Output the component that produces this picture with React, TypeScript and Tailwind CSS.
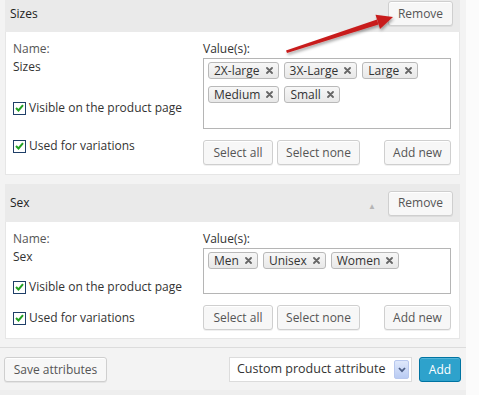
import React from 'react';

const font = { fontFamily: '"Open Sans", "Noto Sans", sans-serif' };

function XIcon() {
  return (
    <svg width="7" height="7" viewBox="0 0 7 7" className="shrink-0">
      <path d="M1 1 L6 6 M6 1 L1 6" stroke="#666" strokeWidth="1.8" strokeLinecap="round" />
    </svg>
  );
}

function Tag({ label }: { label: string }) {
  return (
    <span className="inline-flex items-center h-[17px] pl-[5px] pr-[5px] gap-[6px] border border-[#b9b9b9] rounded-[3px] bg-gradient-to-b from-[#f7f7f7] to-[#e8e8e8] text-[#333] leading-none">
      {label}
      <XIcon />
    </span>
  );
}

function Btn({ children, className = '' }: { children: React.ReactNode; className?: string }) {
  return (
    <button
      type="button"
      className={`h-[25px] whitespace-nowrap border border-[#cfcfcf] rounded-[3px] bg-[#f7f7f7] text-[#555] shadow-[inset_0_1px_0_#fff,0_1px_0_rgba(0,0,0,0.06)] leading-none ${className}`}
    >
      {children}
    </button>
  );
}

function Check({ label, className = '' }: { label: string; className?: string }) {
  return (
    <div className={`flex items-center gap-[3px] h-[18px] text-[#333] whitespace-nowrap ${className}`}>
      <span className="w-[13px] h-[13px] border border-[#1f3f68] bg-white flex items-center justify-center">
        <svg width="9" height="8" viewBox="0 0 9 8">
          <path d="M1 4 L3.5 6.5 L8 1.2" stroke="#21a121" strokeWidth="2" fill="none" />
        </svg>
      </span>
      {label}
    </div>
  );
}

interface AttrProps {
  name: string;
  values: string[];
  boxH: number;
  visibleMt: string;
  usedMt: string;
  headerH: string;
  bodyPb: string;
  arrow?: boolean;
}

function Attribute({ name, values, boxH, visibleMt, usedMt, headerH, bodyPb, arrow }: AttrProps) {
  return (
    <div>
      <div className={`flex items-center bg-[#eaeaea] pl-[5px] pr-[7px] ${headerH}`}>
        <span className="text-[#222] flex-1">{name}</span>
        {arrow && <span className="text-[#b5b5b5] text-[8px] mr-[12px] mt-[5px]">▲</span>}
        <Btn className="w-[65px] h-[24px]">Remove</Btn>
      </div>
      <div className={`flex bg-white border border-[#e6e6e6] border-t-0 pt-[8px] pl-[7px] pr-[8px] ${bodyPb}`}>
        <div className="w-[190px] flex flex-col leading-[18px]">
          <span className="text-[#555]">Name:</span>
          <span className="text-[#333]">{name}</span>
          <Check label="Visible on the product page" className={visibleMt} />
          <Check label="Used for variations" className={usedMt} />
        </div>
        <div className="flex-1 flex flex-col leading-[18px]">
          <span className="text-[#333]">Value(s):</span>
          <div
            className="border border-[#b5b5b5] bg-white flex flex-wrap content-start gap-x-[5px] gap-y-[7px] pt-[3px] pl-[4px] pr-[4px]"
            style={{ height: boxH }}
          >
            {values.map((v) => (
              <Tag key={v} label={v} />
            ))}
          </div>
          <div className="flex mt-[11px] gap-[4px]">
            <Btn className="w-[70px]">Select all</Btn>
            <Btn className="w-[83px]">Select none</Btn>
            <Btn className="w-[67px] ml-auto">Add new</Btn>
          </div>
        </div>
      </div>
    </div>
  );
}

export default function App() {
  return (
    <div className="relative w-[479px] h-[395px] overflow-hidden bg-[#fbfbfb] text-[12px]" style={font}>
      <div className="w-[466px] h-full bg-[#f3f3f3] flex flex-col">
        <div className="pl-[5px] pr-[6px] -mt-[5px] flex flex-col gap-[9px]">
          <Attribute
            name="Sizes"
            values={['2X-large', '3X-Large', 'Large', 'Medium', 'Small']}
            boxH={71}
            headerH="h-[37px]"
            bodyPb="pb-[9px]"
            visibleMt="mt-[23px]"
            usedMt="mt-[20px]"
          />
          <Attribute
            name="Sex"
            values={['Men', 'Unisex', 'Women']}
            boxH={46}
            headerH="h-[38px]"
            bodyPb="pb-[8px]"
            visibleMt="mt-[12px]"
            usedMt="mt-[13px]"
            arrow
          />
        </div>
        <div className="mt-[8px] border-t border-[#dcdcdc] flex-1 flex flex-col">
          <div className="flex items-center pt-[9px] pl-[4px] pr-[5px]">
            <Btn className="w-[103px]">Save attributes</Btn>
            <div className="ml-auto w-[183px] h-[25px] border border-[#dcdcdc] bg-white flex items-center pl-[7px] pr-[2px] text-[#333] text-[12.5px]">
              <span className="flex-1 whitespace-nowrap overflow-hidden">Custom product attribute</span>
              <span className="w-[15px] h-[19px] rounded-[2px] border border-[#b8c8ee] bg-gradient-to-b from-[#dfe8fb] to-[#b9cbf3] flex items-center justify-center">
                <svg width="8" height="6" viewBox="0 0 8 6">
                  <path d="M1 1 L4 4.2 L7 1" stroke="#4d5f86" strokeWidth="1.8" fill="none" />
                </svg>
              </span>
            </div>
            <button
              type="button"
              className="ml-[7px] w-[42px] h-[25px] rounded-[3px] bg-[#2ea2cc] border border-[#0074a2] text-white leading-none shadow-[inset_0_1px_0_rgba(120,200,230,0.5)]"
            >
              Add
            </button>
          </div>
          <div className="mt-auto h-[5px] bg-[#eeeeee]" />
        </div>
      </div>
      <svg className="absolute left-0 top-0 pointer-events-none" width="479" height="395">
        <defs>
          <filter id="sh" x="-20%" y="-50%" width="140%" height="200%">
            <feDropShadow dx="1" dy="2" stdDeviation="1.5" floodColor="#000" floodOpacity="0.35" />
          </filter>
        </defs>
        <g filter="url(#sh)">
          <polygon points="286,50.5 287,53 378.5,24.5 377,19.6" fill="#c81d1d" />
          <polygon points="393,17 375.5,14.8 380,29" fill="#c81d1d" />
        </g>
      </svg>
    </div>
  );
}
